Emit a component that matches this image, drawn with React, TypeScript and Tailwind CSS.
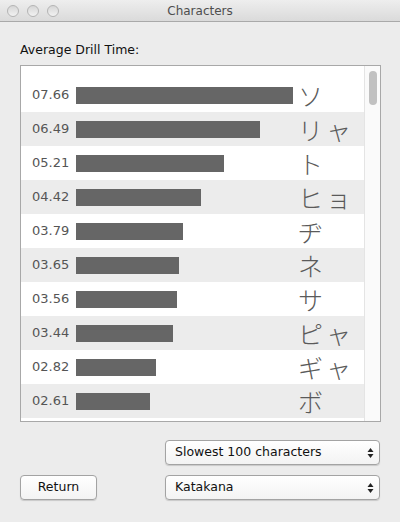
import React from "react";

const rows = [
  { t: "07.66", w: 217, c: "ソ" },
  { t: "06.49", w: 184, c: "リャ" },
  { t: "05.21", w: 148, c: "ト" },
  { t: "04.42", w: 125, c: "ヒョ" },
  { t: "03.79", w: 107, c: "ヂ" },
  { t: "03.65", w: 103, c: "ネ" },
  { t: "03.56", w: 101, c: "サ" },
  { t: "03.44", w: 97, c: "ピャ" },
  { t: "02.82", w: 80, c: "ギャ" },
  { t: "02.61", w: 74, c: "ボ" },
];

function Arrows() {
  return (
    <svg width="7" height="12" viewBox="0 0 7 12" className="shrink-0">
      <path d="M3.5 1 L6.5 5 L0.5 5 Z" fill="#222" />
      <path d="M3.5 11 L6.5 7 L0.5 7 Z" fill="#222" />
    </svg>
  );
}

function Popup({ label }: { label: string }) {
  return (
    <div className="w-[215px] h-[25px] rounded-[4px] border border-[#a3a3a3] bg-gradient-to-b from-[#ffffff] to-[#f3f3f3] shadow-[0_1px_1px_rgba(0,0,0,0.15)] flex items-center justify-between pl-[9px] pr-[5px] text-[12.5px] text-[#111]">
      <span>{label}</span>
      <Arrows />
    </div>
  );
}

export default function App() {
  return (
    <div className="w-[400px] h-[522px] bg-[#ececec] flex flex-col font-['DejaVu_Sans',sans-serif] overflow-hidden">
      <div className="h-[22px] shrink-0 relative flex items-center justify-center border-b border-[#a9a9a9] bg-gradient-to-b from-[#eeeeee] to-[#dadada]">
        <div className="absolute left-[7px] top-[5px] flex gap-[8px]">
          <div className="w-[12px] h-[12px] rounded-full border border-[#b4b4b4] bg-gradient-to-b from-[#d6d6d6] to-[#f2f2f2]" />
          <div className="w-[12px] h-[12px] rounded-full border border-[#b4b4b4] bg-gradient-to-b from-[#d6d6d6] to-[#f2f2f2]" />
          <div className="w-[12px] h-[12px] rounded-full border border-[#b4b4b4] bg-gradient-to-b from-[#d6d6d6] to-[#f2f2f2]" />
        </div>
        <span className="text-[12px] text-[#4e4e4e]">Characters</span>
      </div>

      <div className="px-[20px] pt-[20px] flex flex-col">
        <div className="text-[12.5px] text-[#111] leading-[16px] h-[23px]">Average Drill Time:</div>
        <div className="w-[361px] h-[357px] border border-[#a8a8a8] bg-white flex">
          <div className="w-[343px] pt-[12px] flex flex-col">
            {rows.map((r, i) => (
              <div
                key={r.t}
                className={`h-[34px] flex items-center ${i % 2 === 1 ? "bg-[#ececec]" : "bg-white"}`}
              >
                <div className="w-[55px] pl-[11px] text-[13px] text-[#555]">{r.t}</div>
                <div className="w-[222px] flex items-center">
                  <div className="h-[17px] bg-[#666666]" style={{ width: r.w }} />
                </div>
                <div className="text-[25px] leading-[34px] text-[#5a5a5a] tracking-[3px] font-['Noto_Sans_CJK_JP',sans-serif] font-light">
                  {r.c}
                </div>
              </div>
            ))}
          </div>
          <div className="flex-1 bg-[#fafafa] border-l border-[#e4e4e4] pt-[5px] flex justify-center">
            <div className="w-[8px] h-[34px] rounded-full bg-[#c1c1c1]" />
          </div>
        </div>

        <div className="mt-[18px] flex flex-col items-end gap-[10px]">
          <Popup label="Slowest 100 characters" />
        </div>
        <div className="mt-[10px] flex justify-between items-center">
          <div className="w-[77px] h-[25px] rounded-[4px] border border-[#a3a3a3] bg-gradient-to-b from-[#ffffff] to-[#f3f3f3] shadow-[0_1px_1px_rgba(0,0,0,0.15)] flex items-center justify-center text-[12.5px] text-[#111]">
            Return
          </div>
          <Popup label="Katakana" />
        </div>
      </div>
    </div>
  );
}
